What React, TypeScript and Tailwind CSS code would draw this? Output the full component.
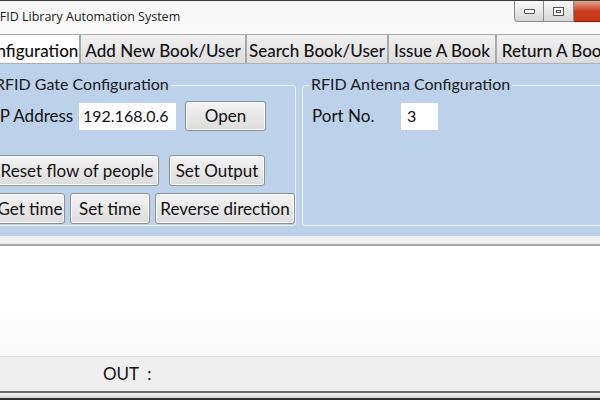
import type { ReactNode } from 'react'

const font = { fontFamily: '"Lato", "Noto Sans", sans-serif' }

function WinButton({ children, className }: { children: ReactNode; className?: string }) {
  return (
    <button
      className={`shrink-0 whitespace-nowrap rounded-[3px] border border-[#8f8f8f] bg-gradient-to-b from-[#f4f4f4] to-[#dcdcdc] text-[17px] text-[#111] shadow-[inset_0_0_0_1px_#fcfcfc] ${className ?? ''}`}
    >
      {children}
    </button>
  )
}

function Tab({ label, active, className }: { label: string; active?: boolean; className: string }) {
  return (
    <div
      className={`flex h-full shrink-0 items-center justify-center whitespace-nowrap border-x border-t border-[#a9a9a9] pt-[3px] text-[17px] font-medium text-[#111] ${
        active ? 'bg-white' : 'mt-[2px] bg-gradient-to-b from-[#f2f2f2] to-[#dcdcdc]'
      } ${className}`}
    >
      {label}
    </div>
  )
}

function GroupBox({ title, className, children }: { title: string; className: string; children: ReactNode }) {
  return (
    <div className={`relative shrink-0 rounded-[3px] border border-[#eef4fb] ${className}`}>
      <span className="absolute -top-[13px] left-[6px] whitespace-nowrap bg-[#bcd1ea] px-[2px] text-[16px] leading-[22px] text-[#1a1a1a]">
        {title}
      </span>
      {children}
    </div>
  )
}

export default function App() {
  return (
    <div className="h-[400px] w-[600px] overflow-hidden bg-[#f0f0f0]" style={font}>
      <div className="-ml-[28px] flex h-full w-[660px] flex-col">
        {/* title bar */}
        <div className="flex h-[34px] shrink-0 border-t border-[#3a3a3a] bg-gradient-to-b from-[#f7f7f7] to-[#fbfbfb]">
          <div
            className="flex-1 whitespace-nowrap pl-[20px] pt-[7px] text-[12.5px] text-[#1a1a1a]"
            style={{ fontFamily: '"Open Sans", sans-serif' }}
          >
            RFID Library Automation System
          </div>
          <div className="mr-[10px] flex h-[21px]">
            <div className="flex w-[30px] items-center justify-center rounded-bl-[4px] border border-t-0 border-[#8a8a8a] bg-gradient-to-b from-[#fafafa] to-[#d6d6d6]">
              <div className="h-[5px] w-[11px] rounded-[1px] border border-[#555] bg-white" />
            </div>
            <div className="flex w-[30px] items-center justify-center border-b border-r border-[#8a8a8a] bg-gradient-to-b from-[#fafafa] to-[#d6d6d6]">
              <div className="flex h-[9px] w-[11px] items-center justify-center border border-[#555] bg-white">
                <div className="h-[3px] w-[5px] border border-[#555]" />
              </div>
            </div>
            <div className="w-[48px] border-b border-[#7a1a0a] bg-gradient-to-b from-[#e8a08a] via-[#cc3a1c] to-[#c8371c]" />
          </div>
        </div>

        {/* tabs */}
        <div className="flex h-[30px] shrink-0 items-end border-b border-[#b0b0b0] bg-[#f0f0f0]">
          <Tab label="Configuration" active className="ml-[2px] w-[106px]" />
          <Tab label="Add New Book/User" className="w-[166px]" />
          <Tab label="Search Book/User" className="w-[142px]" />
          <Tab label="Issue A Book" className="w-[108px]" />
          <Tab label="Return A Book" className="w-[120px]" />
        </div>

        {/* blue panel */}
        <div className="flex h-[172px] shrink-0 gap-[6px] bg-[#bcd1ea] pl-[14px] pt-[21px]">
          <GroupBox title="RFID Gate Configuration" className="h-[141px] w-[310px]">
            <div className="flex flex-col pl-[8px] pt-[15px]">
              <div className="flex h-[30px] items-center">
                <span className="w-[84px] whitespace-nowrap text-[17px] text-[#111]">IP Address</span>
                <div className="flex h-[27px] w-[97px] items-center bg-white pl-[4px] text-[16px] text-[#111]">
                  192.168.0.6
                </div>
                <WinButton className="ml-[9px] h-[30px] w-[81px]">Open</WinButton>
              </div>
              <div className="mt-[24px] flex gap-[10px]">
                <WinButton className="h-[31px] w-[164px]">Reset flow of people</WinButton>
                <WinButton className="h-[31px] w-[96px]">Set Output</WinButton>
              </div>
              <div className="mt-[7px] flex gap-[5px]">
                <WinButton className="h-[31px] w-[70px]">Get time</WinButton>
                <WinButton className="h-[31px] w-[80px]">Set time</WinButton>
                <WinButton className="h-[31px] w-[140px]">Reverse direction</WinButton>
              </div>
            </div>
          </GroupBox>
          <GroupBox title="RFID Antenna Configuration" className="h-[141px] flex-1">
            <div className="mt-[15px] flex h-[30px] items-center pl-[9px]">
              <span className="w-[89px] whitespace-nowrap text-[17px] text-[#111]">Port No.</span>
              <div className="flex h-[27px] w-[37px] items-center bg-white pl-[6px] text-[16px] text-[#111]">3</div>
            </div>
          </GroupBox>
        </div>

        {/* separator */}
        <div className="h-[10px] shrink-0 border-b-[2px] border-[#a8a8a8] bg-[#f0f0f0]" />

        {/* log area */}
        <div className="h-[110px] shrink-0 bg-gradient-to-b from-white via-white to-[#f9f9f9]" />

        {/* status */}
        <div className="flex h-[35px] shrink-0 items-center border-t border-[#e2e2e2] bg-[#efefef] pl-[131px] text-[17px] text-[#111]">
          OUT&nbsp;&nbsp;:
        </div>
        <div className="h-[2px] shrink-0 bg-[#6a6a6a]" />
        <div className="h-[5px] shrink-0 bg-gradient-to-b from-[#f0f0f0] to-[#d8d8d8]" />
        <div className="flex-1 bg-[#2e2e2e]" />
      </div>
    </div>
  )
}
